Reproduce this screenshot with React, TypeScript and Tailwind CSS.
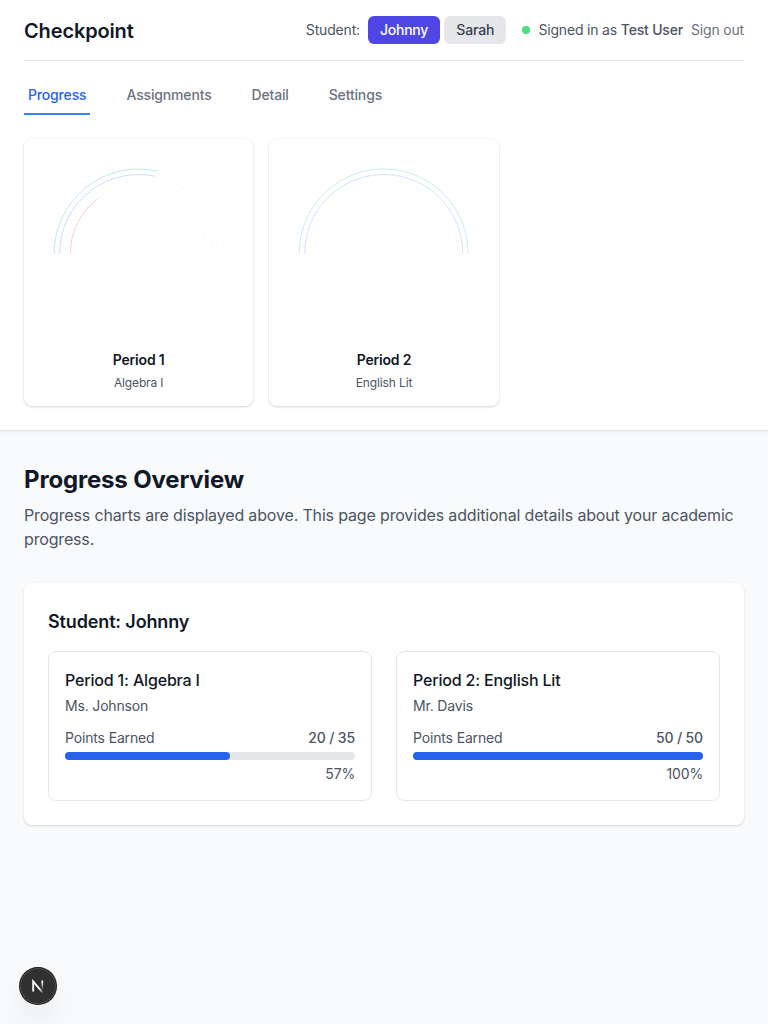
type Period = {
  title: string;
  subject: string;
  teacher: string;
  earned: number;
  total: number;
  rings: { radius: number; value: number; color: string; opacity: number }[];
};

const periods: Period[] = [
  {
    title: 'Period 1',
    subject: 'Algebra I',
    teacher: 'Ms. Johnson',
    earned: 20,
    total: 35,
    rings: [
      { radius: 84.5, value: 0.57, color: '#10b981', opacity: 0.28 },
      { radius: 79, value: 0.57, color: '#3b82f6', opacity: 0.28 },
      { radius: 73.5, value: 0, color: '#f59e0b', opacity: 0.28 },
      { radius: 68.3, value: 0.3, color: '#ef4444', opacity: 0.28 },
    ],
  },
  {
    title: 'Period 2',
    subject: 'English Lit',
    teacher: 'Mr. Davis',
    earned: 50,
    total: 50,
    rings: [
      { radius: 84.5, value: 1, color: '#10b981', opacity: 0.24 },
      { radius: 79, value: 1, color: '#3b82f6', opacity: 0.24 },
      { radius: 73.5, value: 0, color: '#f59e0b', opacity: 0.24 },
      { radius: 68.3, value: 0, color: '#ef4444', opacity: 0.24 },
    ],
  },
];

function arc(radius: number, from: number, to: number) {
  const x = (v: number) => 98.67 - radius * Math.cos(Math.PI * v);
  const y = (v: number) => 98.5 - radius * Math.sin(Math.PI * v);
  return `M ${x(from)} ${y(from)} A ${radius} ${radius} 0 0 1 ${x(to)} ${y(to)}`;
}

function Gauge({ period }: { period: Period }) {
  return (
    <svg className="block h-[192px] w-full" viewBox="0 0 197.33 192" fill="none">
      {period.rings.map((ring) => (
        <g key={ring.radius}>
          {ring.value < 1 && <path d={arc(ring.radius, ring.value, 1)} stroke="#fafbfb" strokeWidth="1" />}
          {ring.value > 0 && (
            <path d={arc(ring.radius, 0, ring.value)} stroke={ring.color} strokeOpacity={ring.opacity} strokeWidth="1" />
          )}
        </g>
      ))}
    </svg>
  );
}

function Header() {
  return (
    <header className="border-b border-[#e5e7eb] bg-white px-6 pb-6 shadow-[0_1px_2px_0_rgba(0,0,0,0.05)]">
      <div className="flex items-center justify-between border-b border-[#e5e7eb] py-4">
        <h1 className="-mb-px pt-px text-xl leading-7 font-semibold tracking-[-0.14px] text-[#111827]">Checkpoint</h1>
        <div className="flex items-center gap-4 text-sm tracking-[-0.18px] text-[#4b5563]">
          <div className="flex items-center gap-2">
            <span>Student:</span>
            <div className="flex gap-1">
              <button className="rounded-md bg-[#4f46e5] px-3 py-1 font-medium tracking-[-0.22px] text-white">Johnny</button>
              <button className="rounded-md bg-[#e5e7eb] px-3 py-1 font-medium tracking-[-0.1px] text-[#374151]">Sarah</button>
            </div>
          </div>
          <div className="flex items-center gap-2">
            <span className="size-2 rounded-full bg-[#4ade80]" />
            <span>
              Signed in as <span className="font-medium">Test User</span>
            </span>
            <button className="text-[#6b7280]">Sign out</button>
          </div>
        </div>
      </div>
      <nav className="mt-4 flex gap-8 text-sm font-medium tracking-[-0.16px] text-[#6b7280]">
        <a className="border-b-2 border-[#3b82f6] px-1 py-2 text-[#2563eb]">Progress</a>
        <a className="border-b-2 border-transparent px-1 py-2">Assignments</a>
        <a className="border-b-2 border-transparent px-1 py-2">Detail</a>
        <a className="border-b-2 border-transparent px-1 py-2">Settings</a>
      </nav>
      <div className="mt-6 grid grid-cols-3 gap-4">
        {periods.map((period) => (
          <div
            key={period.title}
            className="h-[267px] rounded-lg bg-white p-4 text-center shadow-[0_0_0_1px_rgba(0,0,0,0.02),0_1px_3px_0_rgba(0,0,0,0.1),0_1px_2px_0_rgba(0,0,0,0.06)]"
          >
            <Gauge period={period} />
            <h3 className="mt-[3px] text-sm font-semibold tracking-[-0.2px] text-[#111827]">{period.title}</h3>
            <p className="mt-1 text-xs leading-[18px] tracking-[-0.13px] text-[#4b5563]">{period.subject}</p>
          </div>
        ))}
      </div>
    </header>
  );
}

function PeriodDetail({ period }: { period: Period }) {
  const percent = Math.round((period.earned / period.total) * 100);
  return (
    <article className="rounded-lg border border-[#e5e7eb] p-4">
      <h4 className="font-medium tracking-[-0.17px] text-[#111827]">
        {period.title}: {period.subject}
      </h4>
      <p className="mt-1 text-sm tracking-[-0.17px] text-[#4b5563]">{period.teacher}</p>
      <div className="mt-3 flex justify-between text-sm tracking-[-0.15px] text-[#4b5563]">
        <span>Points Earned</span>
        <span className="font-medium">
          {period.earned} / {period.total}
        </span>
      </div>
      <div className="mt-1 h-2 rounded-full bg-[#e5e7eb]">
        <div className="h-2 rounded-full bg-[#2563eb]" style={{ width: `${percent}%` }} />
      </div>
      <p className="mt-1 text-right text-sm tracking-[-0.17px] text-[#4b5563]">{percent}%</p>
    </article>
  );
}

function DevBadge() {
  return (
    <button
      aria-label="Open developer tools"
      className="fixed bottom-5 left-5 flex size-9 items-center justify-center rounded-full bg-[#303030] shadow-[0_0_0_1px_#171717,inset_0_0_0_1px_rgba(255,255,255,0.14),0_16px_32px_-8px_rgba(0,0,0,0.2)]"
    >
      <svg width="14" height="14" viewBox="0 0 14 14" fill="none">
        <defs>
          <linearGradient id="stem" x1="11" y1="3" x2="11" y2="11" gradientUnits="userSpaceOnUse">
            <stop stopColor="white" />
            <stop offset="1" stopColor="white" stopOpacity="0" />
          </linearGradient>
          <linearGradient id="diagonal" x1="9" y1="9.5" x2="12.5" y2="14" gradientUnits="userSpaceOnUse">
            <stop stopColor="white" />
            <stop offset="1" stopColor="white" stopOpacity="0" />
          </linearGradient>
        </defs>
        <path d="M2.2 12.5V2.5L12 14" stroke="url(#diagonal)" strokeWidth="1.9" />
        <path d="M11.3 1.5V11" stroke="url(#stem)" strokeWidth="1.7" />
      </svg>
    </button>
  );
}

export default function App() {
  return (
    <div className="min-h-screen bg-[#f9fafb] font-['Inter',sans-serif] text-[#111827] antialiased">
      <Header />
      <main className="px-6 py-8">
        <h2 className="-mb-px pt-px text-2xl font-bold tracking-[-0.17px]">Progress Overview</h2>
        <p className="mt-2 tracking-[-0.16px] text-[#4b5563]">
          Progress charts are displayed above. This page provides additional details about your academic progress.
        </p>
        <section className="mt-8 rounded-lg bg-white p-6 shadow-[0_1px_3px_0_rgba(0,0,0,0.1),0_1px_2px_0_rgba(0,0,0,0.06)]">
          <h3 className="mb-[15px] pt-px text-lg font-semibold tracking-[-0.14px]">Student: Johnny</h3>
          <div className="grid grid-cols-2 gap-6">
            {periods.map((period) => (
              <PeriodDetail key={period.title} period={period} />
            ))}
          </div>
        </section>
      </main>
      <DevBadge />
    </div>
  );
}
